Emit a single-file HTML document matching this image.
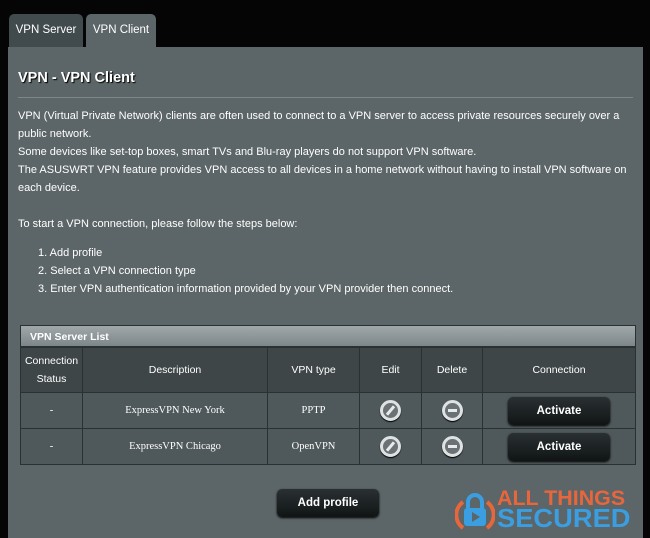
<!DOCTYPE html>
<html><head><style>
*{margin:0;padding:0;box-sizing:border-box}
body{width:650px;height:538px;background:#050505;font-family:"Liberation Sans",Arial,sans-serif;color:#fff;position:relative;overflow:hidden}
.tab{position:absolute;top:14px;height:34px;border-radius:5px 5px 0 0;font-size:11.5px;line-height:33px;text-align:center;color:#fff}
#t1{left:9px;width:74px;background:#414a4d}
#t2{left:86px;width:70px;background:#5c6567}
#panel{position:absolute;left:8px;top:47px;width:635px;height:491px;background:#5c6567}
.title{position:absolute;left:18px;top:70px;font-size:14.5px;font-weight:bold;text-shadow:1px 1px 1px #000}
.hr{position:absolute;left:18px;top:97px;width:615px;height:1px;background:#7e8689}
.t{position:absolute;left:18px;font-size:11px;white-space:nowrap}
table{position:absolute;left:20px;top:347px;width:616px;border-collapse:collapse;font-size:10.5px}
td{border:1px solid #2a3133;text-align:center;vertical-align:middle}
.hd td{background:#3e4648;height:45px;line-height:18px}
.rw td{background:#4f585b;height:36px;font-family:"Liberation Serif",serif;font-size:10.5px}
.sh{position:absolute;left:20px;top:325px;width:616px;height:22px;background:linear-gradient(#a0a8aa,#7d8688);font-size:10.5px;font-weight:bold;line-height:22px;padding-left:9px;border:1px solid #2a3133}
.btn{display:inline-block;width:102px;height:28px;border-radius:5px;background:linear-gradient(#2a3133,#101415);font-family:"Liberation Sans",sans-serif;font-weight:bold;font-size:11.5px;line-height:28px;color:#fff;box-shadow:0 1px 2px #000}
.ic{display:inline-block;width:21px;height:21px;border-radius:50%;border:3px solid #dfe2e3;background:#6a7275;vertical-align:middle;position:relative;box-shadow:0 1px 1px #000}
.del:after{content:"";position:absolute;left:3px;top:6px;width:9px;height:3px;background:#e8eaeb}
.ed:after{content:"";position:absolute;left:6px;top:2px;width:3px;height:11px;background:#e8eaeb;transform:rotate(40deg)}
</style></head><body>
<div class="tab" id="t1">VPN Server</div>
<div class="tab" id="t2">VPN Client</div>
<div id="panel"></div>
<div class="title">VPN - VPN Client</div>
<div class="hr"></div>
<div class="t" style="top:110px">VPN (Virtual Private Network) clients are often used to connect to a VPN server to access private resources securely over a</div>
<div class="t" style="top:128px">public network.</div>
<div class="t" style="top:146px">Some devices like set-top boxes, smart TVs and Blu-ray players do not support VPN software.</div>
<div class="t" style="top:164px">The ASUSWRT VPN feature provides VPN access to all devices in a home network without having to install VPN software on</div>
<div class="t" style="top:182px">each device.</div>
<div class="t" style="top:218px">To start a VPN connection, please follow the steps below:</div>
<div class="t" style="top:247px;left:38px">1. Add profile</div>
<div class="t" style="top:265px;left:38px">2. Select a VPN connection type</div>
<div class="t" style="top:283px;left:38px">3. Enter VPN authentication information provided by your VPN provider then connect.</div>
<div class="sh">VPN Server List</div>
<table>
<tr class="hd"><td style="width:62px">Connection<br>Status</td><td style="width:185px">Description</td><td style="width:92px">VPN type</td><td style="width:62px">Edit</td><td style="width:61px">Delete</td><td>Connection</td></tr>
<tr class="rw"><td>-</td><td>ExpressVPN New York</td><td>PPTP</td><td><span class="ic ed"></span></td><td><span class="ic del"></span></td><td><span class="btn">Activate</span></td></tr>
<tr class="rw"><td>-</td><td>ExpressVPN Chicago</td><td>OpenVPN</td><td><span class="ic ed"></span></td><td><span class="ic del"></span></td><td><span class="btn">Activate</span></td></tr>
</table>
<div class="btn" style="position:absolute;left:277px;top:489px;text-align:center">Add profile</div>
<svg style="position:absolute;left:455px;top:490px" width="40" height="42" viewBox="0 0 40 42">
<path d="M8 12 A16 16 0 0 0 8 38" stroke="#e8663c" stroke-width="4" fill="none"/>
<path d="M32 12 A16 16 0 0 1 32 38" stroke="#e8663c" stroke-width="4" fill="none"/>
<path d="M13 18 V12 A7 7 0 0 1 27 12 V18" stroke="#3a9ee0" stroke-width="4" fill="none"/>
<rect x="9" y="18" width="22" height="18" rx="3" fill="#3a9ee0"/>
<path d="M17 22 L25 27 L17 32Z" fill="#5c6567"/>
</svg>
<div style="position:absolute;left:497px;top:490px;font-weight:900;font-size:21px;line-height:18px;color:#e8663c;transform:scaleX(1.02);transform-origin:left">ALL THINGS</div>
<div style="position:absolute;left:497px;top:506px;font-weight:900;font-size:26px;line-height:24px;color:#3a9ee0;transform:scaleX(1.05);transform-origin:left">SECURED</div>
</body></html>
